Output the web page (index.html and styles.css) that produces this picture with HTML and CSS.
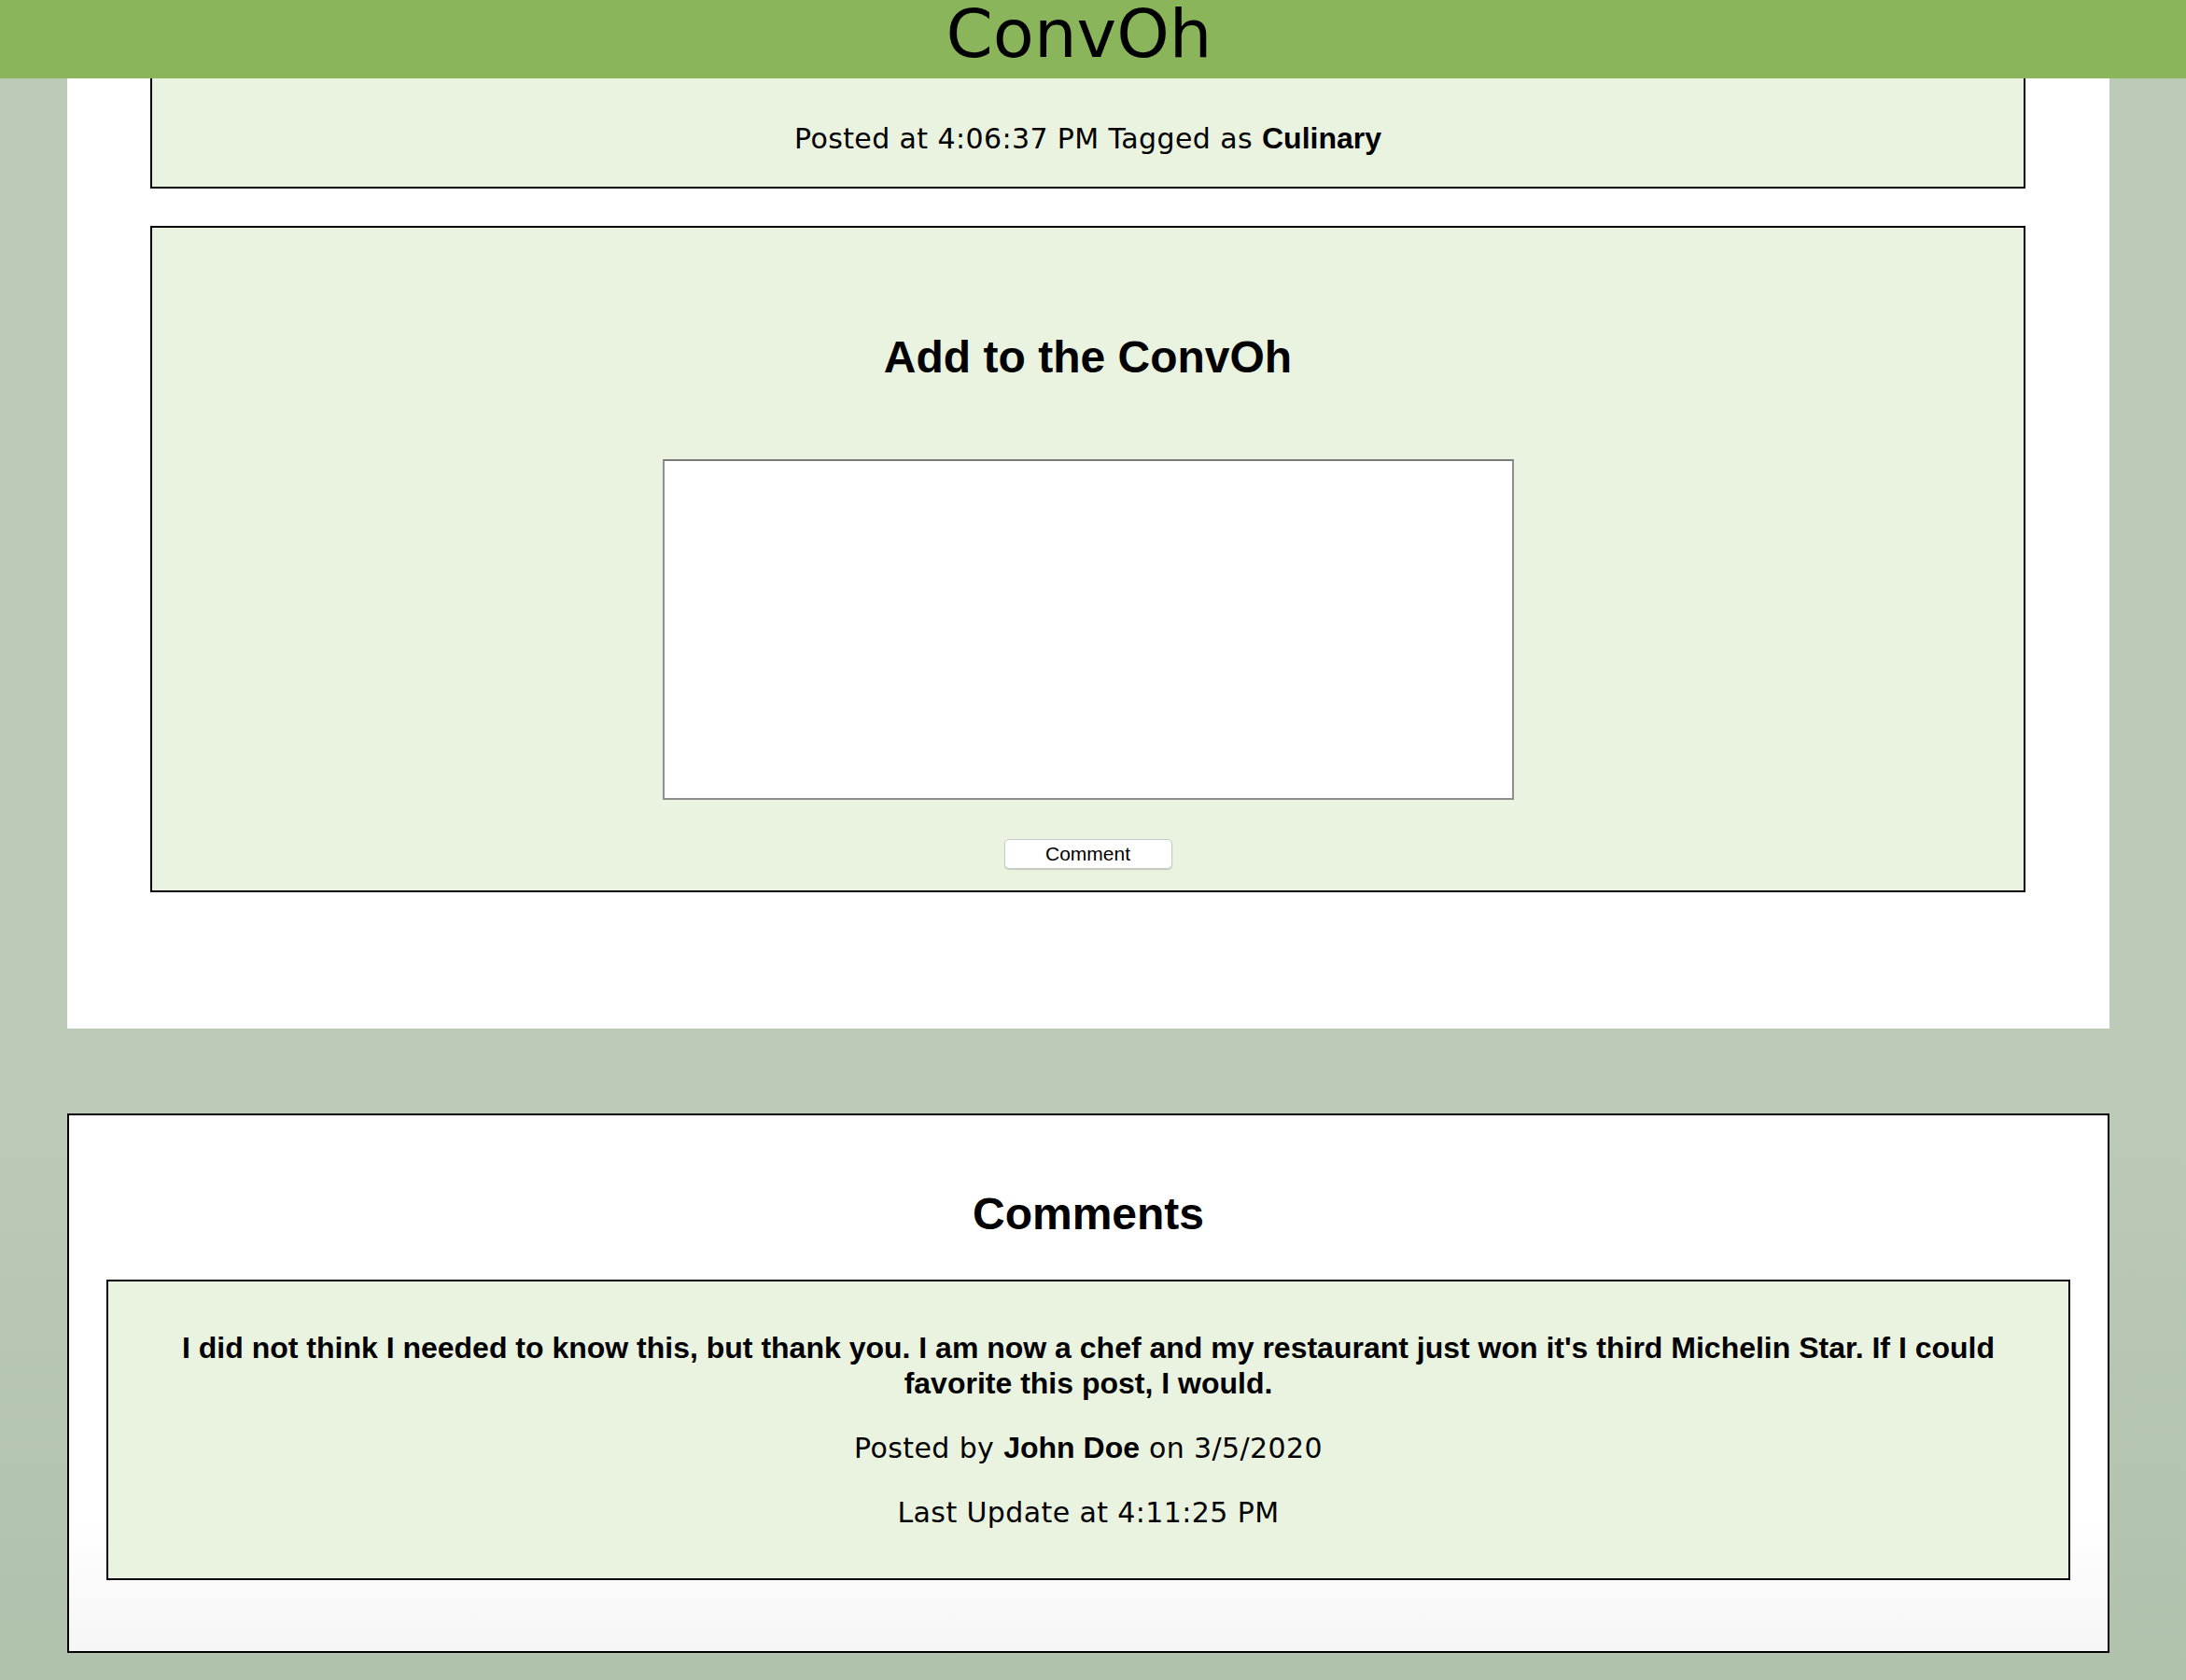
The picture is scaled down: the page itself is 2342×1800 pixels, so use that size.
FILE: index.html
```html
<!DOCTYPE html>
<html lang="en">
<head>
<meta charset="utf-8">
<title>ConvOh</title>
<link rel="stylesheet" href="styles.css">
</head>
<body>
<header class="topbar">
  <h1 class="brand">ConvOh</h1>
</header>
<main class="panel">
  <section class="card card-post">
    <p class="meta">Posted at 4:06:37 PM Tagged as <strong class="strong">Culinary</strong></p>
  </section>
  <section class="card card-form">
    <h2 class="heading">Add to the ConvOh</h2>
    <textarea class="comment-input"></textarea>
    <button class="btn" type="button">Comment</button>
  </section>
</main>
<section class="comments">
  <h2 class="heading heading-comments">Comments</h2>
  <article class="card comment">
    <p class="comment-text">I did not think I needed to know this, but thank you. I am now a chef and my restaurant just won it's third Michelin Star. If I could favorite this post, I would.</p>
    <p class="meta">Posted by <strong class="strong">John Doe</strong> on 3/5/2020</p>
    <p class="meta">Last Update at 4:11:25 PM</p>
  </article>
</section>
</body>
</html>
```

FILE: styles.css
```css
html, body {
  margin: 0;
  padding: 0;
}
body {
  min-height: 1800px;
  background: linear-gradient(to bottom, #bbcbb8 0px, #bbcbb8 1150px, #b0c1ac 1800px);
  font-family: "Liberation Sans", Arial, sans-serif;
  color: #000;
}
.topbar {
  height: 84px;
  box-sizing: border-box;
  background: #8ab55a;
  text-align: center;
  padding: 6px 30px 0 0;
}
.brand {
  margin: 0;
  font-family: "DejaVu Sans", sans-serif;
  font-weight: 400;
  font-size: 72px;
  line-height: 60px;
}
.panel {
  margin-left: 72px;
  width: 2188px;
  box-sizing: border-box;
  background: #fff;
  padding: 0 90px 146px 89px;
}
.card {
  background: #eaf3e0;
  border: 2px solid #000;
  text-align: center;
}
.card-post {
  border-top: none;
  padding: 14px 50px 1px;
}
.meta {
  margin: 32px 0;
  font-family: "DejaVu Sans", sans-serif;
  font-size: 30px;
  line-height: 37px;
  letter-spacing: 0.4px;
}
.strong {
  font-family: "Liberation Sans", Arial, sans-serif;
  font-weight: 700;
  font-size: 32px;
  letter-spacing: 0;
}
.card-form {
  margin-top: 40px;
  padding: 111px 50px 23px;
  display: flex;
  flex-direction: column;
  align-items: center;
}
.heading {
  margin: 0;
  font-family: "Liberation Sans", Arial, sans-serif;
  font-weight: 700;
  font-size: 48px;
  line-height: 56px;
  text-align: center;
}
.card-form .heading {
  margin-bottom: 81px;
}
.comment-input {
  display: block;
  width: 912px;
  height: 365px;
  box-sizing: border-box;
  margin: 0;
  background: #fff;
  border: 2px solid #8e8e8e;
  border-top-color: #7a7a7a;
  resize: none;
  outline: none;
}
.btn {
  margin-top: 42px;
  width: 180px;
  height: 32px;
  box-sizing: border-box;
  background: #fff;
  border: 1px solid #c9c9c9;
  border-radius: 5px;
  box-shadow: 0 1px 1px rgba(0, 0, 0, 0.18);
  font-family: "Liberation Sans", Arial, sans-serif;
  font-size: 21px;
  line-height: 28px;
  color: #000;
  padding: 0;
}
.comments {
  margin: 91px 0 0 72px;
  width: 2188px;
  box-sizing: border-box;
  border: 2px solid #000;
  background: linear-gradient(to bottom, #fff 0%, #fff 75%, #f6f6f6 100%);
  padding: 78px 40px 76px;
}
.heading-comments {
  margin-bottom: 42px;
}
.comment {
  padding: 20px 50px;
}
.comment-text {
  margin: 32px 0;
  font-family: "Liberation Sans", Arial, sans-serif;
  font-weight: 700;
  font-size: 32px;
  line-height: 38px;
}
```
